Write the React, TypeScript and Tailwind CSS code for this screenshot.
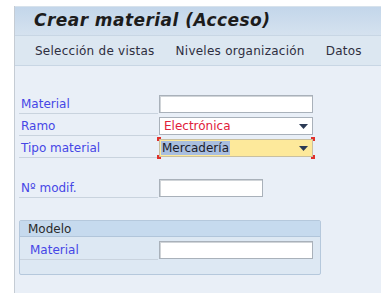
import React from "react";

const font = { fontFamily: '"DejaVu Sans", Verdana, sans-serif' };

function Row({ label, children, lw = 139, indent }: { label: string; children: React.ReactNode; lw?: number; indent?: boolean }) {
  return (
    <div className="flex items-end h-[22px]">
      <div
        className={`h-[20px] border-b border-[#c9d3de] flex items-end pb-[1px] ${indent ? "pl-[10px]" : "pl-[2px]"}`}
        style={{ width: lw }}
      >
        <span className="text-[12px] leading-[16px] text-[#4646e6]">{label}</span>
      </div>
      <div className="ml-[1px] mb-[1px]">{children}</div>
    </div>
  );
}

function Input({ w = 154 }: { w?: number }) {
  return (
    <div
      className="h-[18px] bg-white border border-[#a9b1ba] shadow-[inset_1px_1px_0_#d0d4d8]"
      style={{ width: w }}
    />
  );
}

function Arrow() {
  return (
    <svg width="9" height="5" viewBox="0 0 9 5" className="shrink-0">
      <path d="M0 0h9L4.5 5z" fill="#2b3a55" />
    </svg>
  );
}

export default function App() {
  return (
    <div className="w-[381px] h-[293px] bg-white pl-[14px] pt-[6px] overflow-hidden" style={font}>
      <div className="h-full border-l border-[#c5ccd4] bg-[#e9eff7] flex flex-col">
        <div className="h-[29px] bg-gradient-to-b from-[#c3d6ea] to-[#d5e2ef] border-t border-[#d7e2ec] flex items-center pl-[19px]">
          <span className="text-[17px] font-bold italic text-[#1c1c1c] tracking-[0.45px]">Crear material (Acceso)</span>
        </div>
        <div className="h-[31px] bg-[#dce7f1] border-t border-[#c8d6e4] border-b border-[#c8d3df] flex items-center gap-[21px] pl-[20px] text-[12px] tracking-[0.25px] text-[#2e2e40]">
          <span>Selección de vistas</span>
          <span>Niveles organización</span>
          <span>Datos</span>
        </div>
        <div className="pl-[4px] pt-[26px] flex flex-col">
          <Row label="Material">
            <Input />
          </Row>
          <Row label="Ramo">
            <div className="w-[154px] h-[18px] bg-white border border-[#a9b1ba] flex items-center pl-[4px] pr-[4px] justify-between">
              <span className="text-[12px] text-[#e0203a] leading-none">Electrónica</span>
              <Arrow />
            </div>
          </Row>
          <Row label="Tipo material">
            <div className="relative w-[154px] h-[18px] bg-[#fde99b] border border-[#c9c0a0] flex items-center pl-[1px] pr-[4px] justify-between">
              <span className="text-[12px] text-[#1c1c2a] leading-[14px] bg-[#a9bedf] px-[1px]">Mercadería</span>
              <Arrow />
              <span className="absolute -left-[3px] -top-[3px] w-[4px] h-[4px] border-l-2 border-t-2 border-[#e0302a]" />
              <span className="absolute -right-[3px] -top-[3px] w-[4px] h-[4px] border-r-2 border-t-2 border-[#e0302a]" />
              <span className="absolute -left-[3px] -bottom-[3px] w-[4px] h-[4px] border-l-2 border-b-2 border-[#e0302a]" />
              <span className="absolute -right-[3px] -bottom-[3px] w-[4px] h-[4px] border-r-2 border-b-2 border-[#e0302a]" />
            </div>
          </Row>
          <div className="h-[18px]" />
          <Row label="Nº modif.">
            <Input w={104} />
          </Row>
          <div className="h-[22px]" />
          <div className="w-[302px] h-[55px] border border-[#b5c8dc] rounded-[2px] bg-[#dde8f3] flex flex-col">
            <div className="h-[16px] bg-[#c6daee] border-b border-[#b1c5da] flex items-center pl-[8px]">
              <span className="text-[12px] leading-none text-[#2a2a2a]">Modelo</span>
            </div>
            <div className="pt-[1px]">
              <Row label="Material" lw={138} indent>
                <Input />
              </Row>
            </div>
          </div>
        </div>
      </div>
    </div>
  );
}
